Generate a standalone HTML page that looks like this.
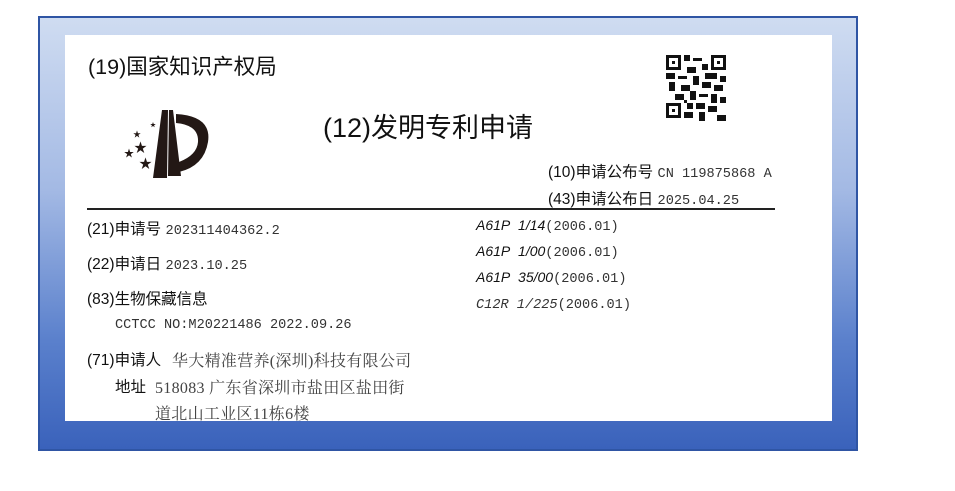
<!DOCTYPE html>
<html><head><meta charset="utf-8"><style>
body{margin:0;width:955px;height:491px;background:#fff;position:relative;overflow:hidden;font-family:"Liberation Sans","Noto Sans CJK SC",sans-serif;color:#111}
#frame{position:absolute;left:38px;top:16px;width:816px;height:431px;border:2px solid #2f55a4;background:linear-gradient(#cfdcf1,#a3b9e4 40%,#5a80cc 75%,#3a62bb)}
#paper{position:absolute;left:65px;top:35px;width:767px;height:386px;background:#fff}
.t{position:absolute;white-space:nowrap}
.lb{font-family:"Liberation Sans","Noto Sans CJK SC",sans-serif;font-size:15.5px}
.v{font-family:"Liberation Mono","Noto Serif CJK SC",monospace;font-size:13.6px;color:#333}
.cv{font-family:"Liberation Serif","Noto Serif CJK SC",serif;font-size:16px;color:#444;letter-spacing:0.3px}
.i{font-family:"Liberation Sans",sans-serif;font-style:italic;font-size:14px}
</style></head><body>
<div id="frame"></div>
<div id="paper"></div>
<div class="t" style="left:88px;top:50px;font-size:21.5px">(19)国家知识产权局</div>
<div class="t" style="left:323px;top:106px;font-size:27px">(12)发明专利申请</div>
<svg class="t" style="left:120px;top:105px" width="95" height="80" viewBox="120 105 95 80">
<path d="M162 110 L168 110 L167 178 L153 178 Z M169 110 L173 110 L181 176 L168 176 Z" fill="#231815"/>
<path d="M176 114 Q212 116 208 142 Q204 166 179 172 L179 162 Q197 155 198 142 Q199 125 176 123 Z" fill="#231815"/>
<g fill="#231815" font-size="13">
<text x="134" y="152">★</text><text x="124" y="157" font-size="10">★</text><text x="139" y="168">★</text><text x="133" y="137" font-size="8">★</text><text x="150" y="127" font-size="6">★</text>
</g></svg>
<svg class="t" style="left:666px;top:55px" width="60" height="66" viewBox="0 0 20 22">
<rect width="20" height="22" fill="#fff"/>
<g fill="#111">
<rect x="0" y="0" width="5" height="5"/><rect x="15" y="0" width="5" height="5"/><rect x="0" y="16" width="5" height="5"/>
</g>
<g fill="#fff"><rect x="1" y="1" width="3" height="3"/><rect x="16" y="1" width="3" height="3"/><rect x="1" y="17" width="3" height="3"/></g>
<g fill="#111"><rect x="2" y="2" width="1" height="1"/><rect x="17" y="2" width="1" height="1"/><rect x="2" y="18" width="1" height="1"/>
<path d="M6 0h2v2h-2zM9 1h3v1h-3zM12 3h2v2h-2zM7 4h3v2h-3zM0 6h3v2h-3zM4 7h3v1h-3zM9 7h2v3h-2zM13 6h4v2h-4zM18 7h2v2h-2zM1 9h2v3h-2zM5 10h3v2h-3zM12 9h3v2h-3zM16 10h3v2h-3zM3 13h3v2h-3zM8 12h2v3h-2zM11 13h3v1h-3zM15 13h2v3h-2zM18 14h2v2h-2zM7 16h2v2h-2zM10 16h3v2h-3zM14 17h3v2h-3zM6 19h3v2h-3zM11 19h2v3h-2zM17 20h3v2h-3zM15 3h1v1h-1zM6 15h1v1h-1z"/></g>
</svg>
<div class="t" style="left:548px;top:160px"><span class="lb">(10)申请公布号</span> <span class="v">CN 119875868 A</span></div>
<div class="t" style="left:548px;top:187px"><span class="lb">(43)申请公布日</span> <span class="v">2025.04.25</span></div>
<div class="t" style="left:87px;top:208px;width:688px;height:2px;background:#222"></div>
<div class="t" style="left:87px;top:217px"><span class="lb">(21)申请号</span> <span class="v">202311404362.2</span></div>
<div class="t" style="left:87px;top:252px"><span class="lb">(22)申请日</span> <span class="v">2023.10.25</span></div>
<div class="t" style="left:87px;top:287px"><span class="lb">(83)生物保藏信息</span></div>
<div class="t" style="left:115px;top:315px"><span class="v">CCTCC NO:M20221486 2022.09.26</span></div>
<div class="t" style="left:87px;top:348px"><span class="lb">(71)申请人</span></div>
<div class="t" style="left:172px;top:348px"><span class="cv">华大精准营养(深圳)科技有限公司</span></div>
<div class="t" style="left:115px;top:375px"><span class="lb">地址</span></div>
<div class="t" style="left:155px;top:375px"><span class="cv">518083 广东省深圳市盐田区盐田街</span></div>
<div class="t" style="left:155px;top:401px"><span class="cv">道北山工业区11栋6楼</span></div>
<div class="t" style="left:476px;top:217px"><span class="i">A61P&nbsp; 1/14</span><span class="v">(2006.01)</span></div>
<div class="t" style="left:476px;top:243px"><span class="i">A61P&nbsp; 1/00</span><span class="v">(2006.01)</span></div>
<div class="t" style="left:476px;top:269px"><span class="i">A61P&nbsp; 35/00</span><span class="v">(2006.01)</span></div>
<div class="t" style="left:476px;top:295px"><span class="v" style="font-style:italic">C12R 1/225</span><span class="v">(2006.01)</span></div>
</body></html>
